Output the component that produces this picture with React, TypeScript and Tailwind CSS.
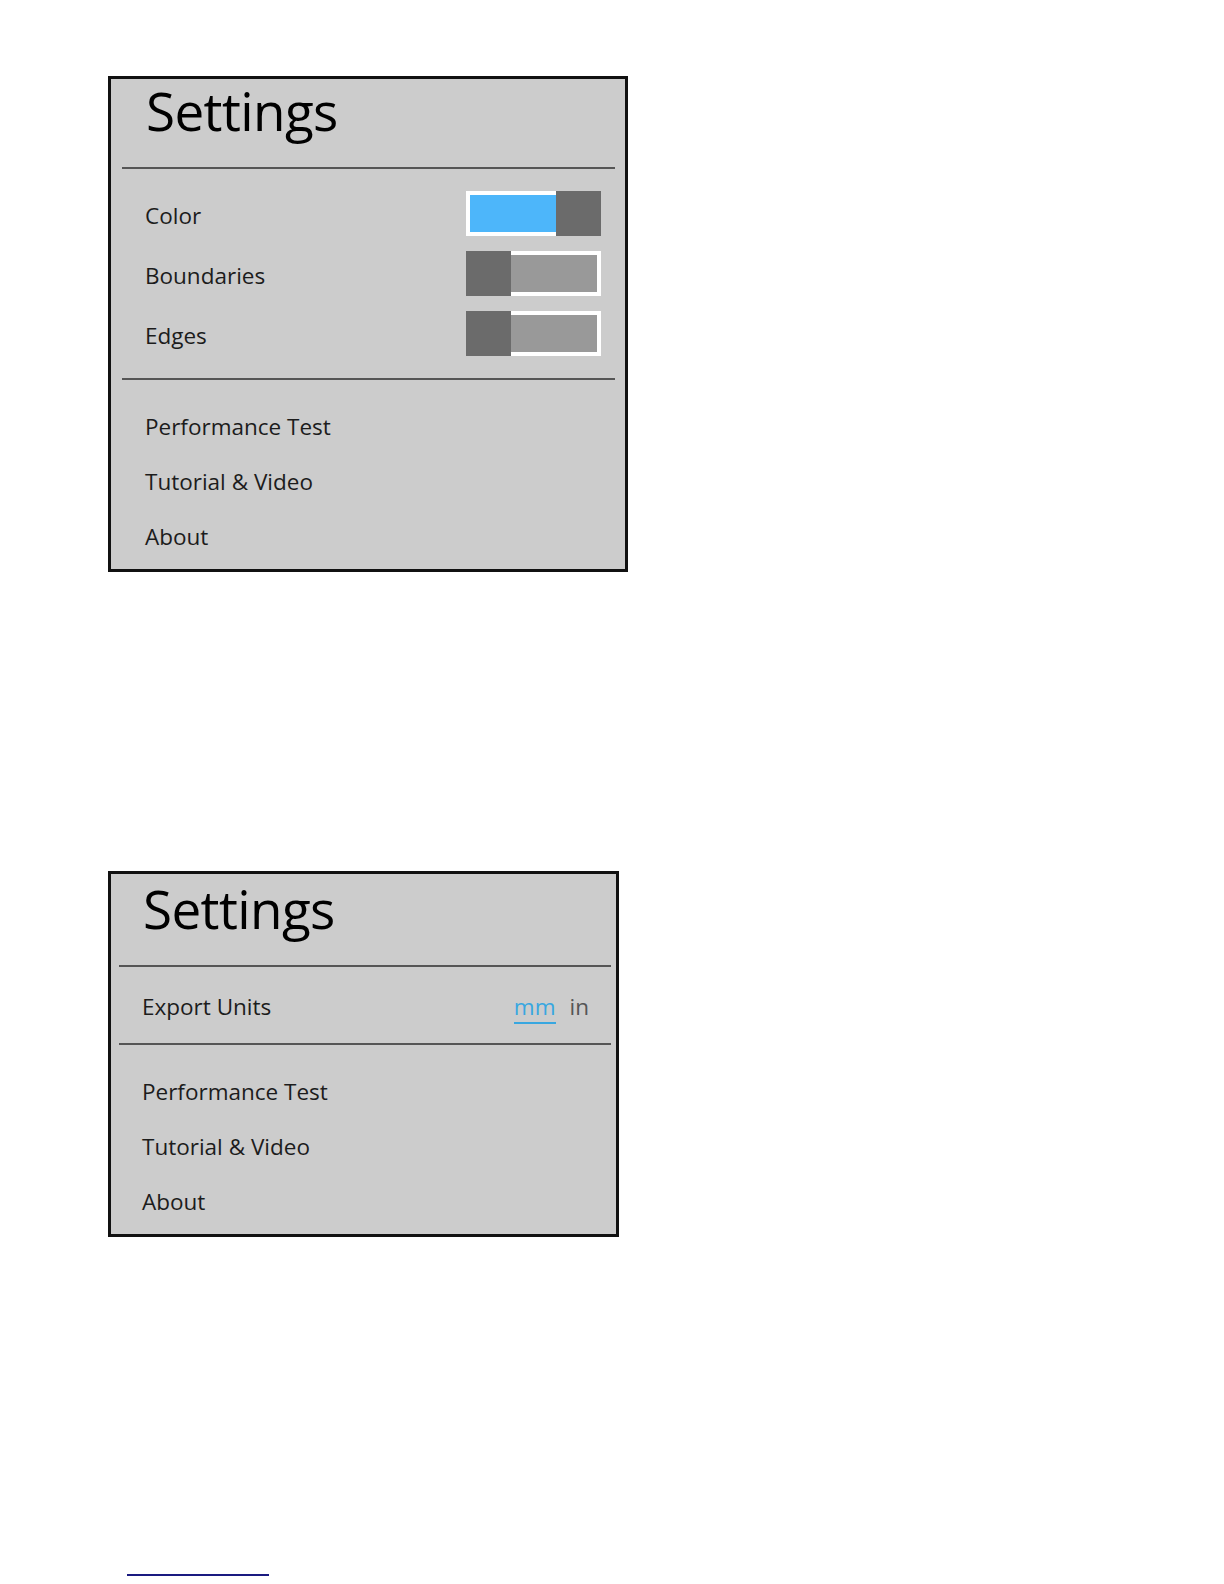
import React from "react";

const font = { fontFamily: '"Open Sans", "Noto Sans", sans-serif' };

function Toggle({ on }: { on: boolean }) {
  if (on) {
    return (
      <div className="flex w-[135px] h-[45px]">
        <div className="flex-1 border-[4px] border-r-0 border-white bg-[#4db6fa]" />
        <div className="w-[45px] h-[45px] bg-[#6b6b6b]" />
      </div>
    );
  }
  return (
    <div className="flex w-[135px] h-[45px]">
      <div className="w-[45px] h-[45px] bg-[#6b6b6b]" />
      <div className="flex-1 border-[4px] border-l-0 border-white bg-[#999999]" />
    </div>
  );
}

function ListItem({ label }: { label: string }) {
  return (
    <div className="h-[55px] flex items-center">
      <span className="text-[22.5px] leading-[22px] text-[#1c1c1c]">{label}</span>
    </div>
  );
}

export default function App() {
  return (
    <div className="min-h-[1584px] bg-white" style={font}>
      <div className="pt-[76px] pl-[108px]">
        {/* Panel 1 */}
        <div className="w-[520px] border-[3px] border-[#111111] bg-[#cccccc]">
          <div className="h-[88px] pt-[5px] pl-[35px]">
            <div className="text-[53px] leading-[53px] h-[53px] tracking-[-0.6px] text-black">Settings</div>
          </div>
          <div className="h-[2px] bg-[#555555] ml-[11px] mr-[10px]" />
          <div className="pt-[14px] pl-[34px] pr-[24px]">
            {[
              { label: "Color", on: true },
              { label: "Boundaries", on: false },
              { label: "Edges", on: false },
            ].map((r) => (
              <div key={r.label} className="h-[60px] flex items-center justify-between">
                <span className="text-[22.5px] leading-[22px] mt-[6px] text-[#1c1c1c]">{r.label}</span>
                <Toggle on={r.on} />
              </div>
            ))}
          </div>
          <div className="h-[2px] bg-[#555555] ml-[11px] mr-[10px] mt-[15px]" />
          <div className="pt-[19px] pb-[5px] pl-[34px]">
            <ListItem label="Performance Test" />
            <ListItem label="Tutorial & Video" />
            <ListItem label="About" />
          </div>
        </div>

        {/* Panel 2 */}
        <div className="mt-[299px] w-[511px] border-[3px] border-[#111111] bg-[#cccccc]">
          <div className="h-[91px] pt-[8px] pl-[32px]">
            <div className="text-[53px] leading-[53px] h-[53px] tracking-[-0.6px] text-black">Settings</div>
          </div>
          <div className="h-[2px] bg-[#555555] ml-[8px] mr-[5px]" />
          <div className="h-[76px] flex items-start justify-between pt-[29px] pl-[31px] pr-[27px]">
            <span className="text-[22.5px] leading-[22px] text-[#1c1c1c]">Export Units</span>
            <div className="flex items-start gap-[14px]">
              <span className="text-[22.5px] leading-[22px] pb-[4px] border-b-2 border-[#38a7e0] text-[#38a7e0]">mm</span>
              <span className="text-[22.5px] leading-[22px] text-[#555555]">in</span>
            </div>
          </div>
          <div className="h-[2px] bg-[#555555] ml-[8px] mr-[5px]" />
          <div className="pt-[19px] pb-[5px] pl-[31px]">
            <ListItem label="Performance Test" />
            <ListItem label="Tutorial & Video" />
            <ListItem label="About" />
          </div>
        </div>

        <div className="mt-[337px] ml-[19px] w-[142px] h-[1.5px] bg-[#1a1a80]" />
      </div>
    </div>
  );
}
